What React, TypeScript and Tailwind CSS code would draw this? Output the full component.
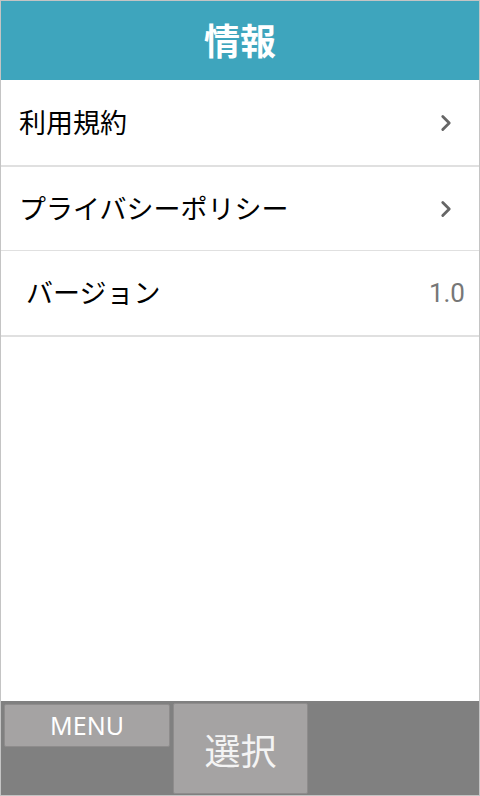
import { ChevronRight } from 'lucide-react'

const JP = "font-['Noto_Sans_CJK_JP',sans-serif]"

interface Row {
  readonly label: string
  readonly value?: string
  readonly indent?: boolean
  readonly border: string
}

const ROWS: readonly Row[] = [
  { label: '利用規約', border: 'border-b-2 h-[87px]' },
  { label: 'プライバシーポリシー', border: 'border-b h-[84px]' },
  { label: 'バージョン', value: '1.0', indent: true, border: 'border-b-2 h-[86px]' },
]

export default function App() {
  return (
    <div className={`flex h-[796px] w-[480px] flex-col border border-[#c4c4c4] bg-white ${JP}`}>
      <header className="flex h-[79px] shrink-0 items-center justify-center bg-[#3ea5bd]">
        <h1 className="-mt-[4px] text-[36px] font-bold leading-none text-white">情報</h1>
      </header>

      <main className="flex-1">
        {ROWS.map((row) => (
          <div
            key={row.label}
            className={`flex items-center justify-between border-[#e0e0e0] pr-[14px] ${row.border} ${row.indent ? 'pl-[25px]' : 'pl-[18px]'}`}
          >
            <span className="-mt-[3px] text-[27px] leading-none text-black">{row.label}</span>
            {row.value ? (
              <span className="font-['Roboto',sans-serif] text-[26px] leading-none text-[#777777]">
                {row.value}
              </span>
            ) : (
              <ChevronRight size={26} strokeWidth={2.6} className="mr-[6px] text-[#666666]" />
            )}
          </div>
        ))}
      </main>

      <footer className="flex h-[94px] shrink-0 items-start gap-[3px] bg-[#808080] pl-[3px] pt-[2px]">
        <button className="mt-[1px] flex h-[43px] w-[166px] items-center justify-center rounded-[2px] border border-[#8e8c8c] bg-[#a5a3a3] font-['Noto_Sans',sans-serif] text-[25px] leading-none text-white">
          MENU
        </button>
        <button className="flex h-[91px] w-[135px] items-center justify-center rounded-[2px] border border-[#8e8c8c] bg-[#a5a3a3] text-[36px] leading-none text-[#f4f4f4]">
          選択
        </button>
      </footer>
    </div>
  )
}
